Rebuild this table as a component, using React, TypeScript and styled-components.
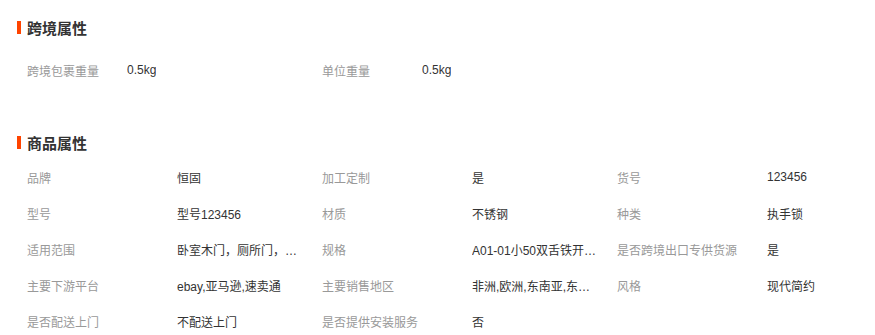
import styled, { createGlobalStyle } from 'styled-components';

const GlobalStyle = createGlobalStyle`
  body {
    margin: 0;
    background: #fff;
    font-family: "Liberation Sans", "Noto Sans CJK SC", sans-serif;
  }
`;

const Page = styled.div`
  padding: 17px 0 0 17px;
  width: 875px;
  box-sizing: border-box;
`;

const Section = styled.section`
  & + & {
    margin-top: 44px;
  }
`;

const Title = styled.h3`
  display: flex;
  align-items: center;
  gap: 6px;
  margin: 0;
  height: 20px;
  font-size: 15px;
  font-weight: bold;
  color: #333;

  &::before {
    content: '';
    width: 4px;
    height: 13px;
    background: #ff4400;
  }
`;

const Grid = styled.div<{ $top: number }>`
  display: grid;
  grid-template-columns: repeat(3, 295px);
  grid-auto-rows: 36px;
  margin-top: ${(p) => p.$top}px;
  padding-left: 10px;
`;

const Item = styled.div<{ $labelWidth: number }>`
  display: flex;
  align-items: center;
  font-size: 12px;
  min-width: 0;
`;

const Label = styled.span<{ $width: number }>`
  flex: 0 0 ${(p) => p.$width}px;
  color: #999;
  white-space: nowrap;
`;

const Value = styled.span`
  color: #333;
  max-width: 125px;
  white-space: nowrap;
  overflow: hidden;
  text-overflow: ellipsis;
`;

const crossBorder = [
  ['跨境包裹重量', '0.5kg'],
  ['单位重量', '0.5kg'],
];

const goods = [
  ['品牌', '恒固'],
  ['加工定制', '是'],
  ['货号', '123456'],
  ['型号', '型号123456'],
  ['材质', '不锈钢'],
  ['种类', '执手锁'],
  ['适用范围', '卧室木门，厕所门，办公室门'],
  ['规格', 'A01-01小50双舌铁开,A01-02大50双舌铁开'],
  ['是否跨境出口专供货源', '是'],
  ['主要下游平台', 'ebay,亚马逊,速卖通'],
  ['主要销售地区', '非洲,欧洲,东南亚,东亚,南美'],
  ['风格', '现代简约'],
  ['是否配送上门', '不配送上门'],
  ['是否提供安装服务', '否'],
];

const App = () => (
  <>
    <GlobalStyle />
    <Page>
      <Section>
        <Title>跨境属性</Title>
        <Grid $top={15}>
          {crossBorder.map(([k, v]) => (
            <Item key={k} $labelWidth={100}>
              <Label $width={100}>{k}</Label>
              <Value>{v}</Value>
            </Item>
          ))}
        </Grid>
      </Section>
      <Section>
        <Title>商品属性</Title>
        <Grid $top={7}>
          {goods.map(([k, v]) => (
            <Item key={k} $labelWidth={150}>
              <Label $width={150}>{k}</Label>
              <Value>{v}</Value>
            </Item>
          ))}
        </Grid>
      </Section>
    </Page>
  </>
);

export default App;
